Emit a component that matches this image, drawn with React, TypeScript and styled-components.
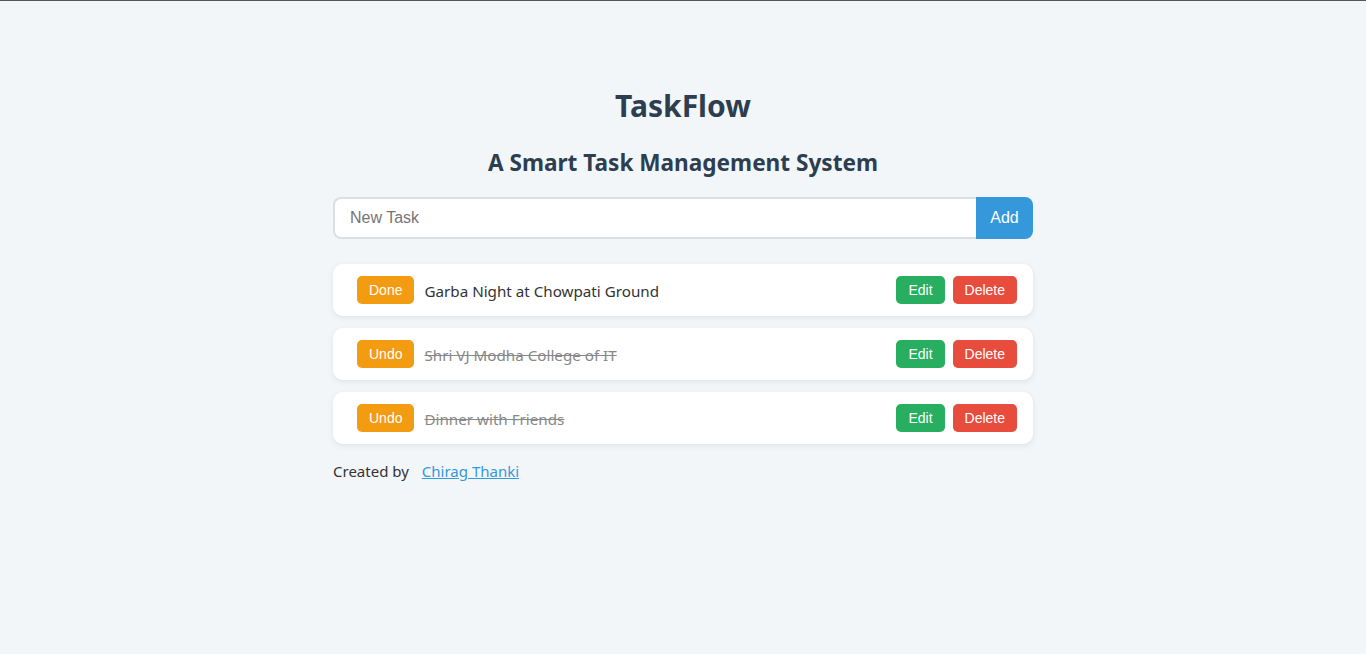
import React, { useState } from "react";
import styled, { createGlobalStyle } from "styled-components";

const GlobalStyle = createGlobalStyle`
  html, body { margin: 0; padding: 0; }
  body {
    background: #f3f6f9;
    border-top: 1px solid #555;
    font-family: "Noto Sans", "Open Sans", sans-serif;
    color: #333;
    min-height: 653px;
  }
`;

const Container = styled.main`
  width: 700px;
  margin: 0 auto;
  padding-top: 84px;
  display: flex;
  flex-direction: column;
`;

const Title = styled.h1`
  margin: 0 0 20px;
  text-align: center;
  font-size: 30px;
  line-height: 42px;
  font-weight: 700;
  color: #2c3e50;
`;

const Subtitle = styled.h2`
  margin: 0 0 18px;
  text-align: center;
  font-size: 22.6px;
  line-height: 32px;
  font-weight: 700;
  color: #2c3e50;
`;

const InputRow = styled.form`
  display: flex;
  height: 42px;
  margin-bottom: 25px;
`;

const TaskInput = styled.input`
  flex: 1;
  box-sizing: border-box;
  height: 42px;
  border: 2px solid #dcdfe2;
  border-right: none;
  border-radius: 8px 0 0 8px;
  padding: 0 15px;
  font-family: "Liberation Sans", Arial, sans-serif;
  font-size: 16px;
  color: #333;
  background: #fff;
  outline: none;
  &::placeholder { color: #757575; }
`;

const AddButton = styled.button`
  width: 57px;
  height: 42px;
  border: none;
  border-radius: 0 8px 8px 0;
  background: #3498db;
  color: #fff;
  font-family: "Liberation Sans", Arial, sans-serif;
  font-size: 16px;
  cursor: pointer;
`;

const List = styled.ul`
  list-style: none;
  margin: 0;
  padding: 0;
  display: flex;
  flex-direction: column;
  gap: 12px;
`;

const Card = styled.li`
  height: 52px;
  box-sizing: border-box;
  display: flex;
  align-items: center;
  padding: 0 16px 0 24px;
  background: #fff;
  border-radius: 10px;
  box-shadow: 0 2px 6px rgba(0, 0, 0, 0.08);
`;

const Btn = styled.button<{ $bg: string }>`
  height: 28px;
  padding: 0 12px;
  border: none;
  border-radius: 5px;
  background: ${(p) => p.$bg};
  color: #fff;
  font-family: "Liberation Sans", Arial, sans-serif;
  font-size: 14px;
  cursor: pointer;
`;

const TaskText = styled.span<{ $done: boolean }>`
  flex: 1;
  margin-left: 10px;
  padding-top: 2px;
  font-size: 15.2px;
  color: ${(p) => (p.$done ? "#888" : "#333")};
  text-decoration: ${(p) => (p.$done ? "line-through" : "none")};
`;

const Actions = styled.div`
  display: flex;
  gap: 8px;
`;

const Footer = styled.p`
  margin: 16px 0 0;
  font-size: 15px;
  line-height: 22px;
  color: #333;
`;

const Link = styled.a`
  margin-left: 13px;
  color: #3498db;
  text-decoration: underline;
`;

type Task = { id: number; text: string; done: boolean };

export default function App() {
  const [tasks, setTasks] = useState<Task[]>([
    { id: 1, text: "Garba Night at Chowpati Ground", done: false },
    { id: 2, text: "Shri VJ Modha College of IT", done: true },
    { id: 3, text: "Dinner with Friends", done: true },
  ]);
  const [value, setValue] = useState("");

  return (
    <>
      <GlobalStyle />
      <Container>
        <Title>TaskFlow</Title>
        <Subtitle>A Smart Task Management System</Subtitle>
        <InputRow
          onSubmit={(e) => {
            e.preventDefault();
            if (!value.trim()) return;
            setTasks([...tasks, { id: Date.now(), text: value, done: false }]);
            setValue("");
          }}
        >
          <TaskInput
            placeholder="New Task"
            value={value}
            onChange={(e) => setValue(e.target.value)}
          />
          <AddButton type="submit">Add</AddButton>
        </InputRow>
        <List>
          {tasks.map((t) => (
            <Card key={t.id}>
              <Btn
                $bg="#f39c12"
                onClick={() =>
                  setTasks(tasks.map((x) => (x.id === t.id ? { ...x, done: !x.done } : x)))
                }
              >
                {t.done ? "Undo" : "Done"}
              </Btn>
              <TaskText $done={t.done}>{t.text}</TaskText>
              <Actions>
                <Btn $bg="#27ae60">Edit</Btn>
                <Btn
                  $bg="#e74c3c"
                  onClick={() => setTasks(tasks.filter((x) => x.id !== t.id))}
                >
                  Delete
                </Btn>
              </Actions>
            </Card>
          ))}
        </List>
        <Footer>
          Created by<Link href="#">Chirag Thanki</Link>
        </Footer>
      </Container>
    </>
  );
}
